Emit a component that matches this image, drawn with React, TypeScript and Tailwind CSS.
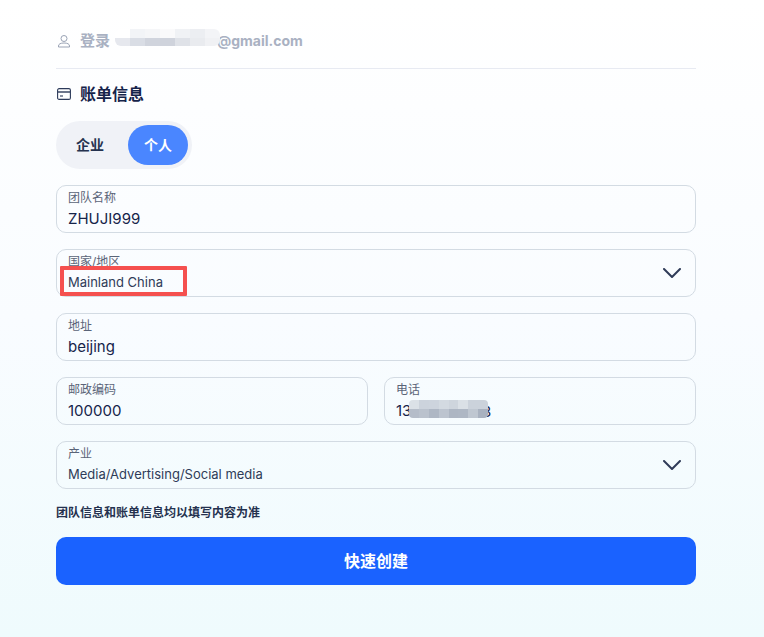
import React from "react";

const FONT = "font-['Inter','Noto_Sans_CJK_SC',sans-serif]";

function Field({ label, value, select, muted, children }: { label: string; value: string; select?: boolean; muted?: boolean; children?: React.ReactNode }) {
  return (
    <div className="relative h-12 rounded-[10px] border border-[#d3dbe3] pl-[11px] pr-3 pt-[3px]">
      <div className="text-xs leading-[18px] text-[#5a6478]">{label}</div>
      <div className={`${muted ? "mt-px text-[13px] text-[#2f3b58]" : "mt-[2px] text-[15px] text-[#16244a]"} leading-[20px]`}>{value}</div>
      {select && (
        <svg width="18" height="10" viewBox="0 0 18 10" fill="none" stroke="#2f3b58" strokeWidth="2" strokeLinecap="round" strokeLinejoin="round" className="absolute right-[14px] top-[18px]">
          <path d="M1 1l8 8 8-8" />
        </svg>
      )}
      {children}
    </div>
  );
}

function Pixels({ rows, className }: { rows: string[][]; className: string }) {
  return (
    <div className={`absolute flex flex-col overflow-hidden ${className}`}>
      {rows.map((row, i) => (
        <div key={i} className="flex flex-1">
          {row.map((c, j) => (
            <div key={j} className="flex-1" style={{ background: c }} />
          ))}
        </div>
      ))}
    </div>
  );
}

export default function App() {
  return (
    <div className={`${FONT} h-[637px] w-full overflow-hidden bg-gradient-to-b from-[#ffffff] via-[#f9fcff] to-[#effbfd] pl-14 pr-[68px] pt-[29px]`}>
      <div className="flex h-6 items-center">
        <svg width="14" height="14" viewBox="0 0 14 14" fill="none" stroke="#9aa3b5" strokeWidth="1" className="ml-[1px]">
          <circle cx="7" cy="4.500" r="3" />
          <path d="M1.500 13v-1c0-2 2-3 5.500-3s5.500 1 5.500 3v1z" />
        </svg>
        <span className="ml-[9px] text-[15px] font-bold text-[#a9b1c2]">登录</span>
        <div className="relative ml-[5px] text-sm font-bold text-[#a9b1c2]">
          <span className="ml-[102px]">@gmail.com</span>
          <Pixels
            className="left-0 top-[-2px] h-[17px] w-[105px] rounded-[6px]"
            rows={[
              ["#ffffff", "#f2f4f7", "#f5f6f8", "#fafafb", "#f0f2f5", "#eceef2", "#f3f4f7"],
              ["#e6e8ee", "#d9dde5", "#d0d4dd", "#cfd3dc", "#dfe2e8", "#e9ebef", "#f0f1f4"],
            ]}
          />
        </div>
      </div>
      <div className="mt-[15px] h-px bg-[#e7eaf2]" />
      <div className="mt-[13px] flex h-6 items-center">
        <svg width="14" height="12" viewBox="0 0 14 12" fill="none" stroke="#2c3a5a" strokeWidth="1.100" className="ml-[1px]">
          <rect x="0.600" y="0.600" width="12.800" height="10.800" rx="1.500" />
          <path d="M0.600 4h12.800" strokeWidth="1.400" />
          <path d="M3 8h3" />
        </svg>
        <span className="ml-[9px] text-base font-bold text-[#16244a]">账单信息</span>
      </div>
      <div className="mt-[15px] flex h-12 w-[136px] items-center rounded-full bg-[#f0f2f7] pl-1">
        <div className="flex h-10 w-[60px] items-center justify-center text-sm font-bold text-[#25324f]">企业</div>
        <div className="ml-2 flex h-10 w-[60px] items-center justify-center rounded-full bg-[#4a86ff] text-sm font-bold text-white">个人</div>
      </div>
      <div className="mt-4 flex flex-col gap-4">
        <Field label="团队名称" value="ZHUJI999" />
        <div className="relative">
          <Field label="国家/地区" value="Mainland China" select muted />
          <div className="absolute left-[4px] top-[17px] h-[30px] w-[127px] rounded-[1px] border-[4px] border-[#f5504f]" />
        </div>
        <Field label="地址" value="beijing" />
        <div className="grid grid-cols-2 gap-4">
          <Field label="邮政编码" value="100000" />
          <Field label="电话" value="13">
            <span className="absolute left-[97px] top-[24px] text-[15px] leading-[20px] text-[#16244a]">8</span>
            <Pixels
              className="left-[24px] top-[22px] h-[18px] w-[79px] rounded-[4px]"
              rows={[
                ["#dbe1e7", "#ccd3dc", "#cdd4dd", "#d3dae1", "#ced5dd", "#dae0e6", "#cbd2db", "#cbd2db"],
                ["#b5bdc9", "#bac2cd", "#aeb7c4", "#bcc4cf", "#adb6c3", "#aeb7c4", "#bfc7d1", "#a9b2c0"],
              ]}
            />
          </Field>
        </div>
        <Field label="产业" value="Media/Advertising/Social media" select muted />
      </div>
      <div className="mt-4 text-xs font-bold leading-4 text-[#25324f]">团队信息和账单信息均以填写内容为准</div>
      <button className="mt-4 flex h-12 w-full items-center justify-center rounded-[10px] bg-[#1a62ff] pb-px text-base font-bold text-white">快速创建</button>
    </div>
  );
}
